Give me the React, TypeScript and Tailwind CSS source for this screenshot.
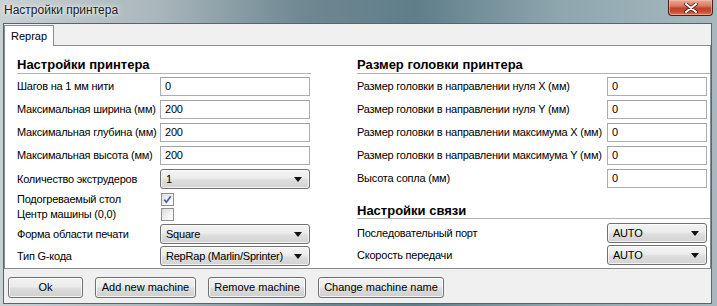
import React from "react";

const Arrow = () => (
  <svg width="8" height="5" viewBox="0 0 8 5" className="shrink-0">
    <path d="M0 0H8L4 5Z" fill="#111" />
  </svg>
);

function Field({ value, className }: { value: string; className: string }) {
  return (
    <div
      className={`h-[19px] shrink-0 border border-[#abadb3] border-t-[#9ea1a8] bg-white flex items-center pl-[4px] text-[11px] text-black ${className}`}
    >
      {value}
    </div>
  );
}

function Combo({ value, className }: { value: string; className: string }) {
  return (
    <div
      className={`h-[20px] shrink-0 rounded-[3px] border border-[#707070] bg-[linear-gradient(to_bottom,#f4f4f4_0%,#ececec_45%,#dedede_55%,#d2d2d2_100%)] shadow-[inset_0_0_0_1px_rgba(255,255,255,0.7)] flex items-center justify-between pl-[5px] pr-[7px] text-[11px] text-black ${className}`}
    >
      <span>{value}</span>
      <Arrow />
    </div>
  );
}

function Check({ checked }: { checked: boolean }) {
  return (
    <div className="w-[13px] h-[13px] border border-[#8e8f8f] bg-[linear-gradient(135deg,#dcdcdc_0%,#f4f4f4_60%,#ffffff_100%)] flex items-center justify-center shrink-0">
      {checked && (
        <svg width="9" height="9" viewBox="0 0 9 9">
          <path d="M1.2 4.6 L3.4 7.2 L7.8 1.2" fill="none" stroke="#4a5f9e" strokeWidth="1.7" />
        </svg>
      )}
    </div>
  );
}

function Btn({ label, className }: { label: string; className: string }) {
  return (
    <div
      className={`h-[21px] rounded-[3px] border border-[#707070] bg-[linear-gradient(to_bottom,#f2f2f2_0%,#ebebeb_48%,#dddddd_52%,#cfcfcf_100%)] shadow-[inset_0_0_0_1px_rgba(255,255,255,0.75)] flex items-center justify-center text-[11px] text-black ${className}`}
    >
      {label}
    </div>
  );
}

export default function App() {
  return (
    <div className="w-[717px] h-[306px] overflow-hidden flex flex-col bg-[linear-gradient(to_right,#c9d1d4_0%,#a9b6bb_22%,#6f8892_42%,#5f7e8a_58%,#8ea6ae_78%,#a7b8be_100%)] font-['Liberation_Sans',Arial,sans-serif]">
      {/* title bar */}
      <div className="h-[23px] flex shrink-0">
        <div className="pl-[4px] leading-[21px] text-[12px] text-[#1a1a1a] [text-shadow:0_0_6px_rgba(255,255,255,0.95),0_0_3px_rgba(255,255,255,0.9)]">
          Настройки принтера
        </div>
        <div className="ml-auto mr-[4px] w-[45px] h-[16px] rounded-b-[4px] border border-t-0 border-[#4a2119] bg-[linear-gradient(to_bottom,#e9ab9a_0%,#d77a63_40%,#c2412a_55%,#c94f33_80%,#de7d5e_100%)] flex items-center justify-center shadow-[inset_0_0_0_1px_rgba(255,200,180,0.5)]">
          <svg width="14" height="10" viewBox="0 0 14 10">
            <path d="M2 1 L12 9 M12 1 L2 9" stroke="#4a2119" strokeWidth="3.6" strokeLinecap="round" />
            <path d="M2 1 L12 9 M12 1 L2 9" stroke="#ffffff" strokeWidth="2" strokeLinecap="round" />
          </svg>
        </div>
      </div>

      {/* client */}
      <div className="ml-[3px] mr-[5px] h-[281px] shrink-0 border border-[#56666e] bg-[#f0f0f0] flex flex-col">
        {/* tab row */}
        <div className="h-[22px] flex shrink-0">
          <div className="mt-[1px] w-[50px] h-[21px] bg-white border-x border-t border-[#898c95] flex items-center pl-[6px] text-[11px] text-black">
            Reprap
          </div>
          <div className="flex-1 border-b border-[#898c95]" />
        </div>

        {/* panel */}
        <div className="h-[223px] shrink-0 bg-white border-x border-b border-[#898c95] flex pl-[12px] text-[11px] tracking-[-0.22px] text-black">
          {/* left column */}
          <div className="w-[294px] flex flex-col">
            <div className="mt-[11px] h-[17px] leading-[16px] border-b border-[#b2b2b2] text-[13px] font-bold tracking-normal">
              Настройки принтера
            </div>
            <div className="mt-[3px] flex flex-col gap-[4px]">
              {[
                ["Шагов на 1 мм нити", "0"],
                ["Максимальная ширина (мм)", "200"],
                ["Максимальная глубина (мм)", "200"],
                ["Максимальная высота (мм)", "200"],
              ].map(([l, v]) => (
                <div key={l} className="h-[19px] flex items-center">
                  <div className="w-[143px] whitespace-nowrap">{l}</div>
                  <Field value={v} className="w-[150px]" />
                </div>
              ))}
              <div className="h-[20px] flex items-center">
                <div className="w-[143px] whitespace-nowrap">Количество экструдеров</div>
                <Combo value="1" className="w-[150px]" />
              </div>
            </div>
            <div className="mt-[3px] h-[15px] flex items-center">
              <div className="w-[144px] whitespace-nowrap">Подогреваемый стол</div>
              <Check checked />
            </div>
            <div className="h-[15px] flex items-center">
              <div className="w-[144px] whitespace-nowrap">Центр машины (0,0)</div>
              <Check checked={false} />
            </div>
            <div className="mt-[2px] h-[20px] flex items-center">
              <div className="w-[143px] whitespace-nowrap">Форма области печати</div>
              <Combo value="Square" className="w-[150px]" />
            </div>
            <div className="mt-[2px] h-[20px] flex items-center">
              <div className="w-[143px] whitespace-nowrap">Тип G-кода</div>
              <Combo value="RepRap (Marlin/Sprinter)" className="w-[150px]" />
            </div>
          </div>

          {/* right column */}
          <div className="ml-[46px] flex-1 flex flex-col">
            <div className="mt-[11px] h-[17px] leading-[16px] border-b border-[#b2b2b2] text-[13px] font-bold tracking-normal">
              Размер головки принтера
            </div>
            <div className="mt-[3px] flex flex-col gap-[4px] pr-[3px]">
              {[
                "Размер головки в направлении нуля X (мм)",
                "Размер головки в направлении нуля Y (мм)",
                "Размер головки в направлении максимума X (мм)",
                "Размер головки в направлении максимума Y (мм)",
                "Высота сопла (мм)",
              ].map((l) => (
                <div key={l} className="h-[19px] flex items-center">
                  <div className="flex-1 whitespace-nowrap">{l}</div>
                  <Field value="0" className="w-[100px]" />
                </div>
              ))}
            </div>
            <div className="mt-[16px] h-[15px] leading-[14px] border-b border-[#b2b2b2] text-[13px] font-bold tracking-normal">
              Настройки связи
            </div>
            <div className="mt-[4px] h-[20px] flex items-center pr-[3px]">
              <div className="flex-1 whitespace-nowrap">Последовательный порт</div>
              <Combo value="AUTO" className="w-[100px]" />
            </div>
            <div className="mt-[2px] h-[20px] flex items-center pr-[3px]">
              <div className="flex-1 whitespace-nowrap">Скорость передачи</div>
              <Combo value="AUTO" className="w-[100px]" />
            </div>
          </div>
        </div>

        {/* buttons */}
        <div className="flex-1 flex items-start pt-[8px] pl-[4px] gap-[12px]">
          <Btn label="Ok" className="w-[75px]" />
          <Btn label="Add new machine" className="w-[101px]" />
          <Btn label="Remove machine" className="w-[98px]" />
          <Btn label="Change machine name" className="w-[126px]" />
        </div>
      </div>
    </div>
  );
}
